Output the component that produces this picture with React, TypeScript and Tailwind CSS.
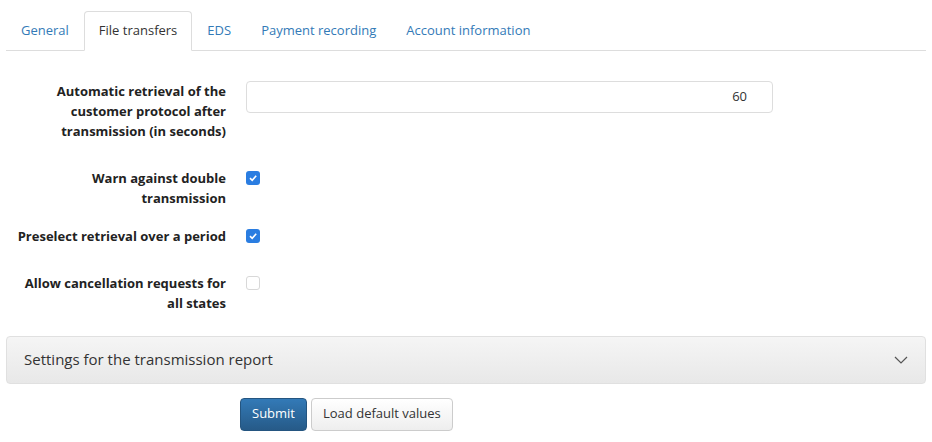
const F = { fontFamily: '"Open Sans", "Liberation Sans", sans-serif' }

const Check = ({ on }: { on: boolean }) =>
  on ? (
    <span className="flex h-[14px] w-[14px] items-center justify-center rounded-[3px] bg-[#2a7de1]">
      <svg width="10" height="10" viewBox="0 0 10 10" fill="none" stroke="white" strokeWidth="1.6">
        <path d="M2 5.2 L4.2 7.3 L8.2 2.8" />
      </svg>
    </span>
  ) : (
    <span className="block h-[14px] w-[14px] rounded-[3px] border border-[#d8d8d8] bg-white" />
  )

const Row = ({ label, children, cls }: { label: React.ReactNode; children: React.ReactNode; cls: string }) => (
  <div className={`flex ${cls}`}>
    <div className="w-[220px] pl-2 text-right text-[13px] font-bold leading-[20px] text-[#222]">{label}</div>
    <div className="ml-[20px]">{children}</div>
  </div>
)

export default function App() {
  const tabs = ['General', 'File transfers', 'EDS', 'Payment recording', 'Account information']
  return (
    <div className="h-[442px] w-[932px] bg-white px-[6px] pt-[11px]" style={F}>
      <div className="flex border-b border-[#dddddd] text-[13px]">
        {tabs.map((t, i) =>
          i === 1 ? (
            <div key={t} className="-mb-px rounded-t-[4px] border border-b-white border-[#dddddd] px-[14px] pt-[9px] pb-[8px] text-[#333]">{t}</div>
          ) : (
            <div key={t} className="border border-transparent px-[14px] pt-[9px] pb-[8px] text-[#337ab7]">{t}</div>
          )
        )}
      </div>
      <Row cls="mt-[30px]" label={<>Automatic retrieval of the<br />customer protocol after<br />transmission (in seconds)</>}>
        <div className="flex h-[32px] w-[527px] items-center justify-end rounded-[4px] border border-[#dddddd] pr-[25px] text-[13px] text-[#333]">60</div>
      </Row>
      <Row cls="mt-[27px]" label={<>Warn against double<br />transmission</>}>
        <div className="pt-[3px]"><Check on /></div>
      </Row>
      <Row cls="mt-[18px]" label="Preselect retrieval over a period">
        <div className="pt-[3px]"><Check on /></div>
      </Row>
      <Row cls="mt-[27px]" label={<>Allow cancellation requests for<br />all states</>}>
        <div className="pt-[3px]"><Check on={false} /></div>
      </Row>
      <div className="mt-[23px] flex h-[48px] items-center justify-between rounded-[4px] border border-[#e0e0e0] bg-gradient-to-b from-[#f5f5f5] to-[#e8e8e8] px-[17px] text-[15px] text-[#333]">
        <span>Settings for the transmission report</span>
        <svg width="14" height="14" viewBox="0 0 14 14" fill="none" stroke="#555" strokeWidth="1.2">
          <path d="M1 4 L7 10 L13 4" />
        </svg>
      </div>
      <div className="ml-[234px] mt-[14px] flex gap-[4px] text-[13px]">
        <button className="h-[33px] rounded-[4px] border border-[#245580] bg-gradient-to-b from-[#337ab7] to-[#265a88] px-[11px] text-white">Submit</button>
        <button className="h-[33px] rounded-[4px] border border-[#cccccc] bg-gradient-to-b from-white to-[#eeeeee] px-[11px] text-[#333]">Load default values</button>
      </div>
    </div>
  )
}
